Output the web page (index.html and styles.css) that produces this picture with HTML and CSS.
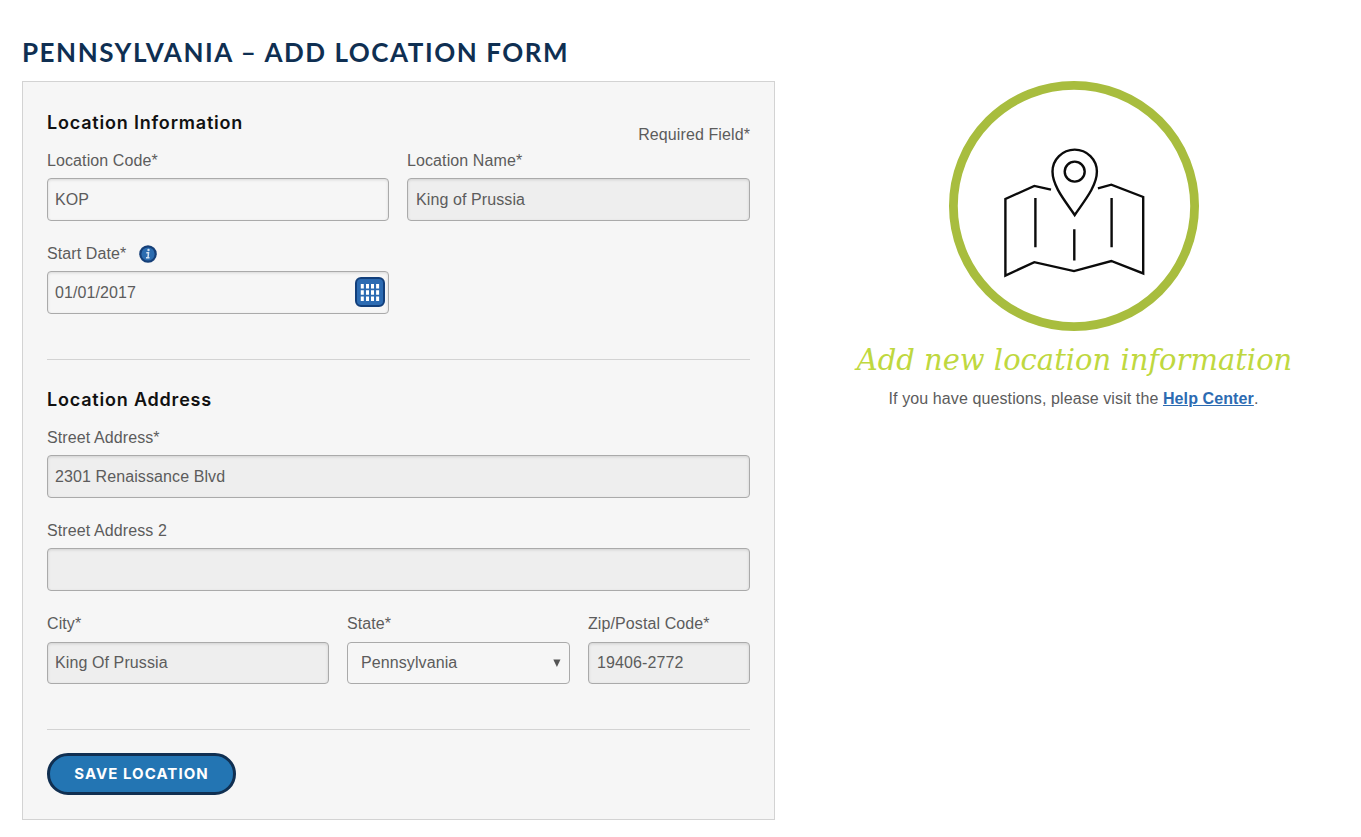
FILE: index.html
```html
<!DOCTYPE html>
<html lang="en">
<head>
<meta charset="utf-8">
<title>Pennsylvania – Add Location Form</title>
<link rel="stylesheet" href="styles.css">
</head>
<body>
<main class="page">
  <h1 class="page-title"><span>PENNSYLVANIA – ADD LOCATION FORM</span></h1>
  <div class="columns">
    <form class="panel">
      <section class="section">
        <div class="section-head">
          <h2 class="section-title info-title">Location Information</h2>
          <span class="required">Required Field*</span>
        </div>
        <div class="row halves">
          <div class="field"><label class="label">Location Code*</label><div class="input">KOP</div></div>
          <div class="field"><label class="label">Location Name*</label><div class="input locked">King of Prussia</div></div>
        </div>
        <div class="row halves">
          <div class="field">
            <label class="label">Start Date*
              <svg class="info" viewBox="0 0 18 18"><circle cx="9" cy="9" r="7.700" fill="#2b6cb0" stroke="#153f78" stroke-width="2.2"/><circle cx="9.5" cy="5" r="1.2" fill="#d5e3f2"/><path d="M7.3 7.7h2.2l-.5 4.8M7 12.7h3.5" fill="none" stroke="#d5e3f2" stroke-width="1.5"/></svg>
            </label>
            <div class="input date">01/01/2017
              <svg class="calendar" viewBox="0 0 30 30"><rect x="1" y="1" width="28" height="28" rx="5" fill="#2c6bb2" stroke="#123f7b" stroke-width="2"/><path d="M7.3 7.1v17M12.5 7.1v17M17.5 7.1v17M22.6 7.1v17" fill="none" stroke="#fff" stroke-width="3" stroke-dasharray="4.5 1.7"/></svg>
            </div>
          </div>
        </div>
      </section>
      <section class="section address">
        <div class="section-head"><h2 class="section-title">Location Address</h2></div>
        <div class="field"><label class="label">Street Address*</label><div class="input locked">2301 Renaissance Blvd</div></div>
        <div class="field"><label class="label">Street Address 2</label><div class="input locked"></div></div>
        <div class="row thirds">
          <div class="field"><label class="label">City*</label><div class="input locked">King Of Prussia</div></div>
          <div class="field"><label class="label">State*</label><div class="input select">Pennsylvania<svg class="caret" viewBox="0 0 8 8"><path d="M.3.6h7.200L3.900 7.900z" fill="#555"/></svg></div></div>
          <div class="field"><label class="label">Zip/Postal Code*</label><div class="input locked">19406-2772</div></div>
        </div>
      </section>
      <div class="actions"><button class="save" type="button">SAVE LOCATION</button></div>
    </form>
    <aside class="help">
      <svg class="map" viewBox="0 0 250 250" fill="none" stroke="#0b0b0b" stroke-width="2.4">
        <circle cx="125" cy="125" r="120.6" stroke="#a8bd3e" stroke-width="8.8"/>
        <path d="M102 108.700 85.300 104.900 56.400 118v76.600l28.900-13.400 39.700 8.900 37.300-10.100 31.900 12.400V116l-31.900-12.300-13.400 3.700"/>
        <path d="M86.4 117v49.3M162.6 117v49.3M125.3 148.3v31.2"/>
        <path d="M125.7 134C117 121 103.500 105.500 103.500 90.600a22.200 22 0 0 1 44.400 0C147.900 105.500 134.500 121 125.700 134z"/>
        <circle cx="125.7" cy="90.6" r="10"/>
      </svg>
      <p class="tagline">Add new location information</p>
      <p class="questions">If you have questions, please visit the <a class="link" href="#">Help Center</a>.</p>
    </aside>
  </div>
</main>
</body>
</html>
```
FILE: styles.css
```css
* { box-sizing: border-box; }
body {
  margin: 0;
  background: #fff;
  color: #5c5c5c;
  font: 16px/18px "Liberation Sans", Arial, sans-serif;
  letter-spacing: .1px;
}
.page { padding: 36px 11px 0 22px; }
.page-title {
  margin: 0 0 13px;
  color: #0f2f52;
  font: 700 26px/32px Lato, sans-serif;
  height: 32px;
  letter-spacing: 1.53px;
  white-space: nowrap;
}
.columns { display: flex; align-items: flex-start; }
.panel {
  width: 753px;
  padding: 24px;
  background: #f6f6f6;
  border: 1px solid #d3d3d3;
}
.section { padding-bottom: 45px; border-bottom: 1px solid #d3d3d3; }
.address { padding-top: 23px; }
.section-head { display: flex; justify-content: space-between; height: 45px; }
.section-title {
  margin: 0;
  color: #111;
  font: 600 18px/33px Inter, sans-serif;
  letter-spacing: .8px;
}
.required { padding-top: 20px; }
.row { display: grid; column-gap: 18px; }
.halves { grid-template-columns: 342px 343px; }
.thirds { grid-template-columns: 282px 223px 162px; }
.row + .row, .field + .row, .address .field + .field { margin-top: 23px; }
.address .row .field + .field { margin-top: 0; }
.label { display: flex; align-items: center; height: 20px; margin-bottom: 7px; }
.info { width: 18px; height: 18px; margin-left: 13px; }
.input {
  display: flex;
  align-items: center;
  height: 43px;
  padding: 0 8px 0 7px;
  border: 1px solid #aaa;
  border-radius: 4px;
  background: #f6f6f6;
  box-shadow: inset 0 1px 3px rgba(0, 0, 0, .12);
}
.locked { background: #eee; }
.halves .locked, .thirds .field:last-child .locked { padding-left: 8px; }
.thirds .label { margin-bottom: 8px; }
.thirds .input { height: 42px; }
.date { justify-content: space-between; padding-right: 3px; }
.calendar { width: 30px; height: 30px; margin-bottom: 1px; }
.thirds .select { justify-content: space-between; padding-left: 13px; box-shadow: none; }
.caret { width: 8px; height: 8px; }
.actions { padding-top: 23px; }
.save {
  display: block;
  width: 189px;
  height: 42px;
  padding: 0;
  border: 3px solid #102f51;
  border-radius: 21px;
  background: #2375b3;
  color: #fff;
  font: 700 15px/36px Inter, sans-serif;
  letter-spacing: 1.05px;
}
.help { flex: 1; padding-left: 22px; text-align: center; }
.map { display: block; width: 250px; height: 250px; margin: 0 auto; }
.tagline {
  margin: 9px 0 0;
  padding-left: 2px;
  color: #bfd83f;
  font: italic 29px/40px "DejaVu Serif", serif;
  letter-spacing: 0;
  white-space: nowrap;
}
.questions { margin: 10px 0 0; letter-spacing: .1px; }
.link { color: #2c6bb2; font-weight: 700; }
```
